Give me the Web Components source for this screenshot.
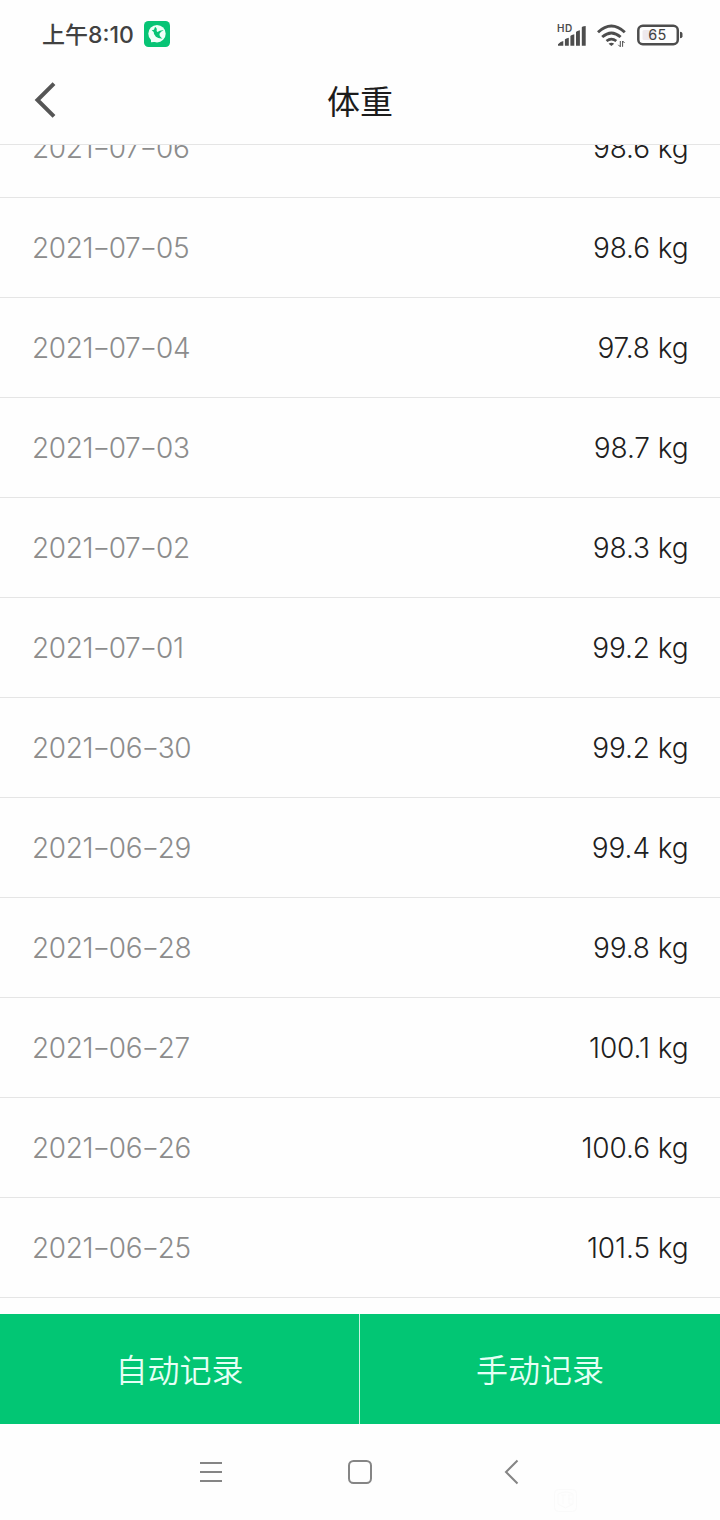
<!DOCTYPE html>
<html lang="zh-CN">
<head>
<meta charset="utf-8">
<meta name="viewport" content="width=device-width, initial-scale=1">
<title>体重</title>
<style>
    body {
        margin: 0;
        background: #fefefe;
        font-family: Inter, "Noto Sans CJK SC", sans-serif;
    }
</style>
</head>
<body>
<weight-app>
    <status-bar slot="top" time="上午8:10" battery="65"></status-bar>
    <title-bar slot="top">体重</title-bar>
    <weight-row date="2021-07-06">98.6 kg</weight-row>
    <weight-row date="2021-07-05">98.6 kg</weight-row>
    <weight-row date="2021-07-04">97.8 kg</weight-row>
    <weight-row date="2021-07-03">98.7 kg</weight-row>
    <weight-row date="2021-07-02">98.3 kg</weight-row>
    <weight-row date="2021-07-01">99.2 kg</weight-row>
    <weight-row date="2021-06-30">99.2 kg</weight-row>
    <weight-row date="2021-06-29">99.4 kg</weight-row>
    <weight-row date="2021-06-28">99.8 kg</weight-row>
    <weight-row date="2021-06-27">100.1 kg</weight-row>
    <weight-row date="2021-06-26">100.6 kg</weight-row>
    <weight-row date="2021-06-25">101.5 kg</weight-row>
    <record-button slot="actions">自动记录</record-button>
    <record-button slot="actions">手动记录</record-button>
    <nav-bar slot="bottom"></nav-bar>
</weight-app>

<script>
class WeightApp extends HTMLElement {
    constructor() {
        super();
        this.attachShadow({ mode: 'open' });
        this.shadowRoot.innerHTML = `
            <style>
                :host {
                    display: flex;
                    flex-direction: column;
                    height: 1520px;
                    overflow: hidden;
                }
                .list {
                    flex: 1;
                    min-height: 0;
                    overflow: hidden;
                }
                /* the list is scrolled part of the way through its first row */
                .rows {
                    margin-top: -47px;
                }
                .actions {
                    display: grid;
                    grid-template-columns: 359px 360px;
                    gap: 1px;
                    height: 110px;
                    background: #c5f3df;
                }
            </style>
            <slot name="top"></slot>
            <div class="list"><div class="rows"><slot></slot></div></div>
            <div class="actions"><slot name="actions"></slot></div>
            <slot name="bottom"></slot>
        `;
    }
}

class StatusBar extends HTMLElement {
    constructor() {
        super();
        this.attachShadow({ mode: 'open' });
        this.shadowRoot.innerHTML = `
            <style>
                :host {
                    display: flex;
                    align-items: center;
                    box-sizing: border-box;
                    height: 60px;
                    padding: 9px 36px 0 42px;
                    color: #414141;
                }
                .time {
                    font-size: 23px;
                    font-weight: 450;
                    line-height: 30px;
                    width: 102px;
                    white-space: nowrap;
                }
                svg { display: block; flex: none; }
                .app { margin-top: -2px; }
                .right {
                    display: flex;
                    align-items: center;
                    margin-left: auto;
                }
                .wifi { margin-left: 10px; }
                .battery {
                    display: grid;
                    place-items: center;
                    margin-left: 10px;
                }
                .battery > * { grid-area: 1 / 1; }
                .level {
                    font-size: 14.5px;
                    font-weight: 400;
                    line-height: 22px;
                    letter-spacing: .4px;
                    margin-right: 5px;
                }
            </style>
            <span class="time"></span>
            <svg class="app" width="26" height="26" viewBox="0 0 26 26">
                <rect width="26" height="26" rx="4.5" fill="#07c475"/>
                <circle cx="13" cy="12.7" r="8.7" fill="#effff8"/>
                <path d="M7 17.5v3.8l5.500-.6z" fill="#effff8"/>
                <path d="M11 6q2.400 1 1.600 3.900l.9 1.100q2.700-2.200 6.200-1.700-3.300 1.200-4.200 3.400-.4 2.800 3 4.700-4.100.4-6.600-1.700-2.500-2.300-2.200-4.800L7.700 9.300l2.300-.5z" fill="#07c475"/>
            </svg>
            <div class="right">
                <svg width="30" height="24" viewBox="0 0 30 24" fill="#4d4d4d">
                    <text x="0" y="8.500" font-size="10" font-weight="600" letter-spacing=".6">HD</text>
                    <path d="M1 22.700v-1.400q2.600-2.700 5.300-3.200v4.600zM7.900 22.700v-6.200q0-.8 3.900-1.800v8zM13.400 22.700V13q0-.8 3.900-1.800v11.500zM19 22.700V9.200q0-.9 3.900-1.900v15.400zM24.800 22.700V4.300q0-.9 3.900-1.400v19.800z"/>
                </svg>
                <svg class="wifi" width="29" height="24" viewBox="0 0 29 24" fill="none" stroke="#4d4d4d">
                    <path d="M1 9.300q13.400-12.400 26.800 0" stroke-width="2.900"/>
                    <path d="M5.200 14q9.200-8.200 18.400 0" stroke-width="2.900"/>
                    <path d="M9.500 18q4.900-3.900 9.800 0" stroke-width="2.700"/>
                    <path d="M11.600 20.700q2.800-2 5.600 0L14.400 23z" fill="#4d4d4d" stroke="none"/>
                    <path d="M23.300 18v5.800l-2-2M25.600 23.800V18l2 2" stroke-width="1"/>
                </svg>
                <div class="battery">
                    <svg width="48" height="24" viewBox="0 0 48 24">
                        <path d="M8 7h12v10H8q-1.500 0-1.500-1.500v-7Q6.500 7 8 7z" fill="#eee9ed"/>
                        <rect x="2.300" y="2.800" width="39.500" height="18.500" rx="4.500" fill="none" stroke="#4d4d4d" stroke-width="2.500"/>
                        <path d="M44 8.800q2.500 0 2.500 2v2.500q0 2-2.500 2z" fill="#4d4d4d"/>
                    </svg>
                    <span class="level"></span>
                </div>
            </div>
        `;
    }

    connectedCallback() {
        this.shadowRoot.querySelector('.time').textContent = this.getAttribute('time');
        this.shadowRoot.querySelector('.level').textContent = this.getAttribute('battery');
    }
}

class TitleBar extends HTMLElement {
    constructor() {
        super();
        this.attachShadow({ mode: 'open' });
        this.shadowRoot.innerHTML = `
            <style>
                :host {
                    display: grid;
                    grid-template-columns: 60px 1fr 60px;
                    align-items: center;
                    box-sizing: border-box;
                    height: 85px;
                    border-bottom: 1px solid #e5e5e5;
                }
                svg { display: block; margin-left: 34px; margin-top: -4px; }
                h1 {
                    margin: -4px 0 0;
                    text-align: center;
                    font-size: 33px;
                    line-height: 48px;
                    font-weight: 400;
                    color: #1c1c1c;
                    font-family: "Noto Sans CJK SC", sans-serif;
                }
            </style>
            <svg width="24" height="36" viewBox="0 0 24 36">
                <path d="M20 1.700 3.500 18 20 34.300" fill="none" stroke="#555" stroke-width="4"/>
            </svg>
            <h1><slot></slot></h1>
        `;
    }
}

class WeightRow extends HTMLElement {
    constructor() {
        super();
        this.attachShadow({ mode: 'open' });
        this.shadowRoot.innerHTML = `
            <style>
                :host {
                    display: flex;
                    align-items: center;
                    justify-content: space-between;
                    box-sizing: border-box;
                    height: 100px;
                    padding: 1px 32px 0;
                    border-bottom: 1px solid #e5e5e5;
                    font-size: 28px;
                    font-weight: 300;
                    line-height: 40px;
                    color: #202020;
                }
                .date {
                    color: #8c8c8c;
                    letter-spacing: -.4px;
                }
                /* long dashes, raised to the middle of the digits */
                .dash {
                    display: inline-block;
                    margin: 0 1.700px;
                    font-feature-settings: "case";
                    transform: translateY(.6px) scaleX(1.400);
                }
                .value {
                    letter-spacing: -.1px;
                    margin-right: -.5px;
                }
            </style>
            <span class="date"></span>
            <span class="value"><slot></slot></span>
        `;
    }

    connectedCallback() {
        this.shadowRoot.querySelector('.date').innerHTML =
            this.getAttribute('date').replaceAll('-', '<span class="dash">-</span>');
    }
}

class RecordButton extends HTMLElement {
    constructor() {
        super();
        this.attachShadow({ mode: 'open' });
        this.shadowRoot.innerHTML = `
            <style>
                :host { display: block; }
                button {
                    display: block;
                    width: 100%;
                    height: 100%;
                    padding: 0 0 2px;
                    border: 0;
                    background: #02c674;
                    color: #e6fff5;
                    font: 350 32px/48px "Noto Sans CJK SC", sans-serif;
                }
            </style>
            <button><slot></slot></button>
        `;
    }
}

class NavBar extends HTMLElement {
    constructor() {
        super();
        this.attachShadow({ mode: 'open' });
        this.shadowRoot.innerHTML = `
            <style>
                :host {
                    display: block;
                    height: 96px;
                }
                svg { display: block; }
            </style>
            <svg width="720" height="96" viewBox="0 0 720 96" fill="none" stroke="#858585" stroke-width="2">
                <path d="M200 39h22M200 48h22M200 57h22"/>
                <rect x="349" y="37" width="22" height="22" rx="4.500"/>
                <path d="M517.500 36.500 506 48l11.500 11.500"/>
                <g stroke="#fafafa" stroke-width="1">
                    <rect x="554.500" y="65.500" width="22" height="22" rx="4"/>
                    <path d="M558 70q8-4 15 0v10l-7.500 4-7.500-4zM561 71h5M563 71v9M568 71h4M569 71v9h3M568 75h4"/>
                </g>
            </svg>
        `;
    }
}

customElements.define('weight-app', WeightApp);
customElements.define('status-bar', StatusBar);
customElements.define('title-bar', TitleBar);
customElements.define('weight-row', WeightRow);
customElements.define('record-button', RecordButton);
customElements.define('nav-bar', NavBar);
</script>
</body>
</html>
